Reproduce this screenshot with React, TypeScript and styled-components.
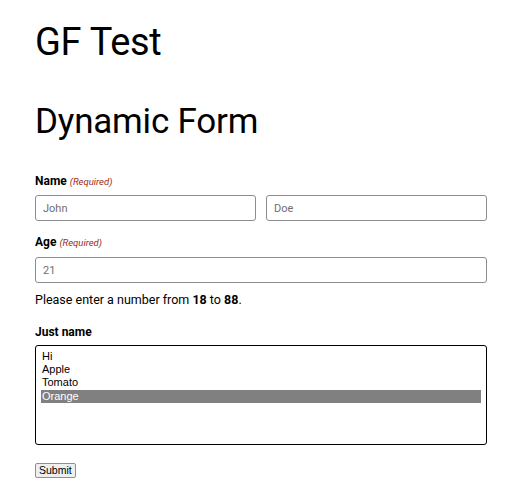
import React from "react";
import styled, { createGlobalStyle } from "styled-components";

const GlobalStyle = createGlobalStyle`
  body {
    margin: 0;
    background: #fff;
    color: #000;
    font-family: Roboto, "Noto Sans", sans-serif;
  }
`;

const Page = styled.div`
  width: 452px;
  padding: 16px 0 20px 35px;
`;

const Title = styled.h1`
  margin: 0;
  font-size: 38px;
  font-weight: 400;
  line-height: 52px;
  letter-spacing: -0.3px;
`;

const FormTitle = styled.h2`
  margin: 30px 0 0;
  font-size: 35px;
  font-weight: 400;
  line-height: 48px;
  letter-spacing: -0.2px;
`;

const Form = styled.form`
  display: flex;
  flex-direction: column;
  margin-top: 27px;
`;

const Field = styled.div`
  display: flex;
  flex-direction: column;
  margin-bottom: 13px;
`;

const Label = styled.label<{ $gap?: number }>`
  font-size: 12px;
  font-weight: 700;
  line-height: 16px;
  margin-bottom: ${(p) => p.$gap ?? 5}px;
`;

const Required = styled.span`
  color: #9b2b1b;
  font-size: 9.5px;
  font-style: italic;
  font-weight: 400;
  margin-left: 3px;
`;

const Row = styled.div`
  display: flex;
  gap: 10px;
`;

const TextInput = styled.input`
  flex: 1;
  min-width: 0;
  box-sizing: border-box;
  height: 26px;
  padding: 0 7px;
  border: 1px solid #8c8c8c;
  border-radius: 3px;
  font-family: Roboto, sans-serif;
  font-size: 11px;
  color: #555;
  &::placeholder {
    color: #6f6f6f;
  }
`;

const Help = styled.p`
  margin: -4px 0 16px;
  font-size: 12.5px;
  line-height: 16px;
  strong {
    font-weight: 700;
  }
`;

const ListBox = styled.select`
  box-sizing: border-box;
  width: 100%;
  height: 100px;
  padding: 4px 5px;
  border: 1.5px solid #000;
  border-radius: 3px;
  font-family: "Liberation Sans", Arial, sans-serif;
  font-size: 11px;
  outline: none;
  option {
    padding: 0 1px;
    font-size: 11px;
  }
  option:checked {
    background: #808080 linear-gradient(#808080, #808080);
    color: #fff;
  }
`;

const SubmitButton = styled.button`
  align-self: flex-start;
  margin-top: 5px;
  height: 15px;
  padding: 0 3px;
  box-sizing: border-box;
  border: 1px solid #8f8f8f;
  border-radius: 2px;
  background: #efefef;
  font-family: "Liberation Sans", Arial, sans-serif;
  font-size: 10.5px;
  line-height: 13px;
  color: #000;
`;

const App: React.FC = () => {
  return (
    <Page>
      <GlobalStyle />
      <Title>GF Test</Title>
      <FormTitle>Dynamic Form</FormTitle>
      <Form onSubmit={(e) => e.preventDefault()}>
        <Field>
          <Label>
            Name<Required>(Required)</Required>
          </Label>
          <Row>
            <TextInput placeholder="John" />
            <TextInput placeholder="Doe" />
          </Row>
        </Field>
        <Field>
          <Label $gap={6}>
            Age<Required>(Required)</Required>
          </Label>
          <Row>
            <TextInput placeholder="21" />
          </Row>
        </Field>
        <Help>
          Please enter a number from <strong>18</strong> to <strong>88</strong>.
        </Help>
        <Field>
          <Label $gap={5}>Just name</Label>
          <ListBox multiple size={6} defaultValue={["Orange"]}>
            <option>Hi</option>
            <option>Apple</option>
            <option>Tomato</option>
            <option>Orange</option>
          </ListBox>
        </Field>
        <SubmitButton type="submit">Submit</SubmitButton>
      </Form>
    </Page>
  );
};

export default App;
